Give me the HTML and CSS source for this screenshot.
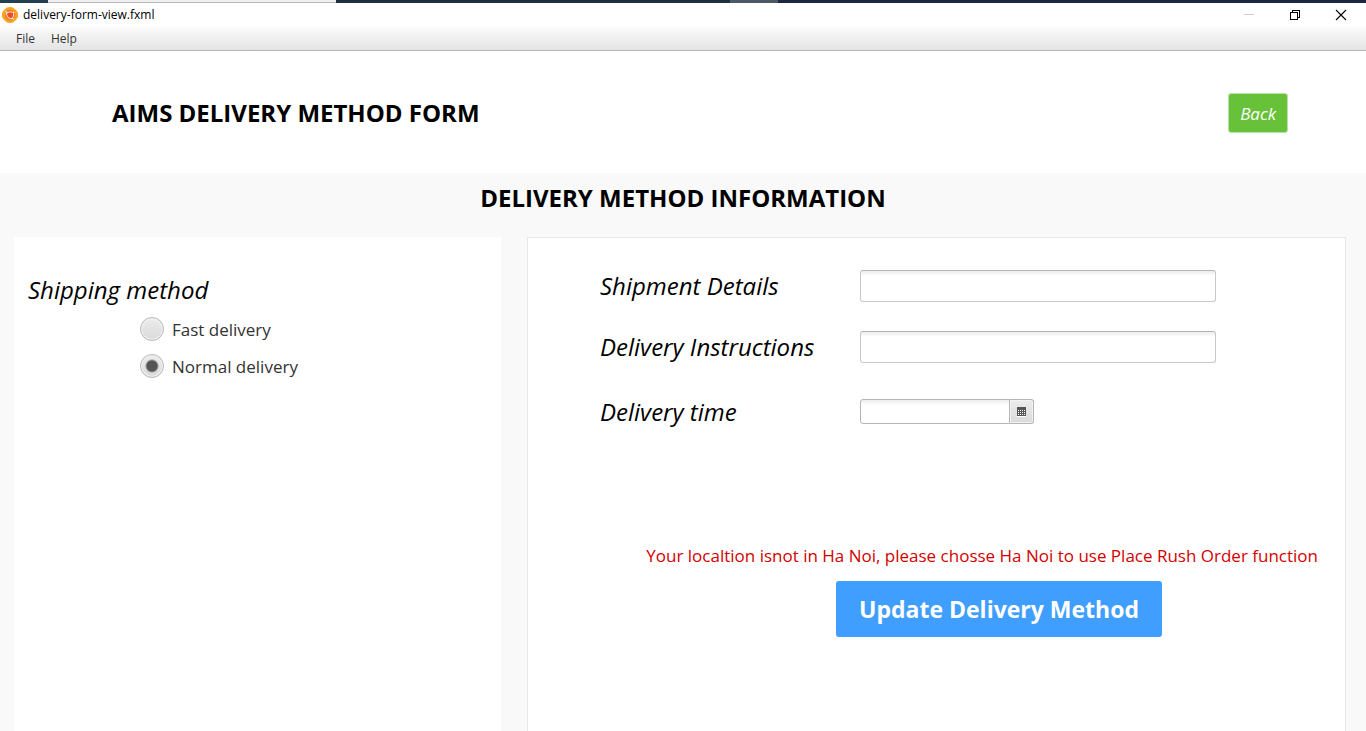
FILE: index.html
```html
<!DOCTYPE html>
<html lang="en">
<head>
<meta charset="utf-8">
<title>delivery-form-view.fxml</title>
<link rel="stylesheet" href="styles.css">
</head>
<body>
<div class="desktop-strip"><span class="strip-dark"></span><span class="strip-tab"></span><span class="strip-fill"></span><span class="strip-item"></span><span class="strip-end"></span></div>
<div class="titlebar">
  <svg class="app-icon" width="16" height="16" viewBox="0 0 16 16" aria-hidden="true">
    <path d="M5 .6 8 0l3 .6L14 3l2 3v4l-2 3-3 2.400L8 16l-3-.6L2 13l-2-3V6l2-3z" fill="#f9a61f"/>
    <circle cx="8" cy="8" r="5.400" fill="#f47a30"/>
    <circle cx="8.500" cy="8" r="3" fill="#ee4a25"/>
    <path d="M3.500 4.500 6 5.500Q8.500 4 10.500 5.500L12 5l-.5 2.500Q12 10 10 10.800L11.500 12 8 11.300Q5.500 11 5.200 8.500L3.700 7l1.300-.5z" fill="none" stroke="#ffe3cf" stroke-width="1"/>
  </svg>
  <span class="window-title">delivery-form-view.fxml</span>
  <div class="window-controls">
    <button class="window-button" aria-label="Minimize" disabled><svg width="12" height="12" shape-rendering="crispEdges"><path d="M1 5.500h10" stroke="#ccc"/></svg></button>
    <button class="window-button" aria-label="Restore"><svg width="12" height="12" fill="none" stroke="#000" shape-rendering="crispEdges"><path d="M1.500 3.500h7v7h-7zM3.500 3.500v-2h7v7h-2"/></svg></button>
    <button class="window-button" aria-label="Close"><svg width="12" height="12" stroke="#000" stroke-width="1.100"><path d="m1 1 10 10M11 1 1 11"/></svg></button>
  </div>
</div>
<nav class="menubar">
  <button class="menu-item">File</button>
  <button class="menu-item">Help</button>
</nav>
<header class="page-header">
  <h1 class="heading">AIMS DELIVERY METHOD FORM</h1>
  <button class="back-button">Back</button>
</header>
<main class="content">
  <h2 class="heading section-title">DELIVERY METHOD INFORMATION</h2>
  <form class="panels">
    <fieldset class="panel methods">
      <legend class="field-label legend">Shipping method</legend>
      <div class="options">
        <label class="option"><input class="radio" type="radio" name="method"> Fast delivery</label>
        <label class="option"><input class="radio" type="radio" name="method" checked> Normal delivery</label>
      </div>
    </fieldset>
    <section class="panel details">
      <div class="fields">
        <label class="field-label" for="details">Shipment Details</label>
        <input class="text-input" id="details" type="text">
        <label class="field-label" for="instructions">Delivery Instructions</label>
        <input class="text-input" id="instructions" type="text">
        <label class="field-label" for="time">Delivery time</label>
        <div class="date-picker">
          <input class="date-input" id="time" type="text">
          <button class="date-button" type="button" aria-label="Choose date"><svg width="9" height="10" shape-rendering="crispEdges"><path d="M0 9h9v1H0z" fill="#fff"/><path d="M0 0h9v9H0z" fill="#555"/><path d="M1 3h1v1H1zm2 0h1v1H3zm2 0h1v1H5zm2 0h1v1H7zM1 5h1v1H1zm2 0h1v1H3zm2 0h1v1H5zm2 0h1v1H7zM1 7h1v1H1zm2 0h1v1H3zm2 0h1v1H5zm2 0h1v1H7z" fill="#fff"/></svg></button>
        </div>
      </div>
      <p class="error" role="alert">Your localtion isnot in Ha Noi, please chosse Ha Noi to use Place Rush Order function</p>
      <button class="update-button" type="button">Update Delivery Method</button>
    </section>
  </form>
</main>
</body>
</html>
```
FILE: styles.css
```css
* { box-sizing: border-box; }

body {
  margin: 0;
  min-height: 100vh;
  display: flex;
  flex-direction: column;
  background: #fff;
  color: #000;
  font-family: "Open Sans", "Noto Sans", sans-serif;
}

button, input { font-family: inherit; }

button { border: 0; padding: 0; background: none; }

.desktop-strip { display: flex; height: 3px; }
.strip-dark { width: 48px; background: #22404f; }
.strip-tab { width: 288px; background: #f0f0f0; border-bottom: 1px solid #b8b8b8; }
.strip-fill { flex: 394; background: #203040; }
.strip-item { width: 48px; background: #4e5866; }
.strip-end { flex: 588; background: #1c2842; }

.titlebar { display: flex; align-items: center; height: 23px; padding-left: 2px; gap: 5px; }
.window-title { font-size: 12px; line-height: 16px; }
.window-controls { display: flex; margin-left: auto; }
.window-button { display: flex; align-items: center; justify-content: center; width: 46px; height: 20px; padding-right: 4px; }

.menubar {
  display: flex;
  height: 25px;
  padding-left: 8px;
  background: linear-gradient(#fdfdfd, #e3e3e3);
  border-bottom: 1px solid #b4b4b4;
}
.menu-item { padding: 0 8px; font-size: 12px; color: #333; }

.page-header {
  display: flex;
  align-items: center;
  justify-content: space-between;
  height: 122px;
  padding: 2px 78px 0 112px;
}
.heading { margin: 0; font-size: 24px; line-height: 32px; font-weight: 700; }
.back-button {
  height: 40px;
  padding: 0 11px;
  background: #67c23a;
  border: 1px solid #b9e2a6;
  border-radius: 3px;
  color: #fff;
  font-size: 17px;
  font-style: italic;
}

.content { flex: 1; display: flex; flex-direction: column; background: #f9f9f9; }
.section-title { padding: 9px 0 23px; text-align: center; }

.panels { flex: 1; display: grid; grid-template-columns: 487fr 819fr; gap: 26px; padding: 0 20px 0 14px; }
.panel { min-width: 0; margin: 0; background: #fff; }
.methods { border: 0; padding: 37px 14px; }
.legend { float: left; width: 100%; padding: 0; }
.field-label { font-size: 24px; line-height: 32px; font-style: italic; white-space: nowrap; }
.options { clear: both; display: flex; flex-direction: column; gap: 13px; padding: 11px 0 0 112px; }
.option { display: flex; align-items: center; gap: 8px; height: 24px; font-size: 17px; color: #333; }

.radio {
  appearance: none;
  width: 24px;
  height: 24px;
  margin: 0;
  border: 1px solid #b8b8b8;
  border-radius: 50%;
  background: linear-gradient(#ececec, #dadada);
  box-shadow: inset 0 0 0 1px #f2f2f2;
}
.radio:checked { background: radial-gradient(circle, #555 5px, transparent 7px), linear-gradient(#ececec, #dadada); }

.details { padding: 32px 27px 32px 72px; border: 1px solid #e8e8e8; border-bottom: 0; }
.fields { display: grid; grid-template-columns: 260px minmax(0, 356px); row-gap: 29px; align-items: center; }
.text-input, .date-input {
  width: 100%;
  height: 32px;
  padding: 0 8px;
  border: 1px solid #c8c8c8;
  border-top-color: #b5b5b5;
  border-radius: 3px;
  background: linear-gradient(#ececec, #fff 5px);
  font-size: 17px;
}
.date-picker { display: flex; width: 174px; height: 25px; margin: 7px 0; }
.date-input { flex: 1; min-width: 0; height: 25px; border-color: #b5b5b5; border-radius: 3px 0 0 3px; }
.date-button {
  display: flex;
  align-items: center;
  justify-content: center;
  width: 24px;
  border: 1px solid #b5b5b5;
  border-left: 0;
  border-radius: 0 3px 3px 0;
  background: linear-gradient(#ececec, #dadada);
  box-shadow: inset 0 0 0 1px #f2f2f2;
}

.error { margin: 113px 0 13px; font-size: 17px; line-height: 24px; color: #d40000; text-align: right; }
.update-button {
  display: block;
  height: 56px;
  margin: 0 156px 0 auto;
  padding: 0 23px;
  border-radius: 3px;
  background: #409eff;
  color: #fff;
  font-size: 23px;
  font-weight: 700;
}
```
